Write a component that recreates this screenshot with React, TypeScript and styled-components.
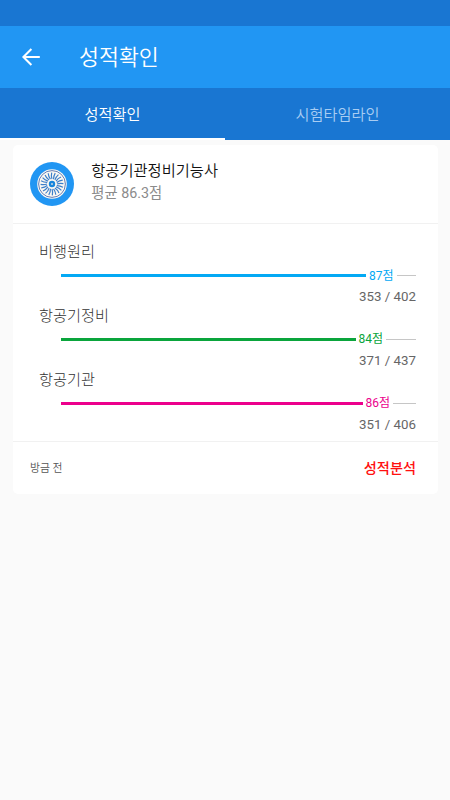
import React from "react";
import styled, { createGlobalStyle } from "styled-components";

const GlobalStyle = createGlobalStyle`
  * { box-sizing: border-box; }
  body {
    margin: 0;
    background: #fafafa;
    font-family: Roboto, "Noto Sans CJK KR", sans-serif;
  }
`;

const Screen = styled.div`
  display: flex;
  flex-direction: column;
  width: 450px;
  height: 800px;
  overflow: hidden;
  background: #fafafa;
`;

const StatusBar = styled.div`
  height: 26px;
  background: #1976d2;
`;

const AppBar = styled.header`
  display: flex;
  align-items: center;
  height: 62px;
  padding-left: 21px;
  gap: 38px;
  background: #2196f3;
  color: #fff;
`;

const BackButton = styled.button`
  display: flex;
  width: 20px;
  height: 20px;
  padding: 0;
  border: 0;
  background: none;
  color: inherit;
`;

const Title = styled.h1`
  margin: 2px 0 0;
  font-size: 21.7px;
  font-weight: 350;
  line-height: 32px;
`;

const Tabs = styled.nav`
  display: grid;
  grid-template-columns: 1fr 1fr;
  height: 52px;
  background: #1976d2;
`;

const Tab = styled.button<{ $active?: boolean }>`
  padding: 0;
  border: 0;
  border-bottom: 2px solid ${(p) => (p.$active ? "#fff" : "#1976d2")};
  background: none;
  color: ${(p) => (p.$active ? "#fff" : "#a9cdf2")};
  font-family: inherit;
  font-size: 15.2px;
  font-weight: 350;
`;

const Card = styled.article`
  margin: 5px 12px 0 12.5px;
  height: 349px;
  border-radius: 5px;
  background: #fff;
`;

const CardHeader = styled.div`
  display: flex;
  gap: 17.3px;
  height: 79px;
  padding: 17px 17.5px 0;
  border-bottom: 1px solid #f1f1f1;
`;

const Summary = styled.div`
  margin-top: -2px;
`;

const Name = styled.div`
  color: #111;
  font-size: 15.3px;
  font-weight: 350;
  line-height: 22px;
`;

const Average = styled.div`
  color: #8b8b8b;
  font-size: 14.3px;
  font-weight: 400;
  line-height: 22px;
`;

const Subjects = styled.div`
  height: 218px;
  padding: 17px 22px 0 26.5px;
  border-bottom: 1px solid #f1f1f1;
`;

const Subject = styled.section`
  height: 63.8px;
`;

const SubjectName = styled.div`
  color: #333;
  font-size: 15.2px;
  font-weight: 300;
  line-height: 22px;
`;

const Track = styled.div`
  display: flex;
  align-items: center;
  height: 16px;
  margin: 4.5px 0 0 22px;
`;

const Fill = styled.div<{ $color: string; $width: number }>`
  width: ${(p) => p.$width}px;
  height: 3px;
  background: ${(p) => p.$color};
`;

const Score = styled.span<{ $color: string }>`
  width: 30.5px;
  padding-left: 3px;
  color: ${(p) => p.$color};
  font-size: 12px;
  font-weight: 400;
  line-height: 16px;
  white-space: nowrap;
`;

const Rest = styled.div`
  flex: 1;
  height: 1px;
  background: #c6c6c6;
`;

const Count = styled.div`
  margin-top: 3.5px;
  color: #666;
  font-size: 13.3px;
  line-height: 20px;
  text-align: right;
`;

const CardFooter = styled.footer`
  display: flex;
  align-items: center;
  justify-content: space-between;
  height: 50px;
  padding: 0 22px 0 17.5px;
`;

const Time = styled.span`
  color: #555;
  font-size: 10.8px;
  font-weight: 350;
`;

const Analyze = styled.button`
  padding: 0 0 1px;
  border: 0;
  background: none;
  color: #ff1010;
  font-family: inherit;
  font-size: 14.2px;
  font-weight: 500;
`;

const subjects = [
  { name: "비행원리", score: 87, count: "353 / 402", color: "#03a9f4", width: 305 },
  { name: "항공기정비", score: 84, count: "371 / 437", color: "#0aa53c", width: 294.5 },
  { name: "항공기관", score: 86, count: "351 / 406", color: "#ec008c", width: 301.5 },
];

const blades = Array.from({ length: 20 }, (_, i) => i * 18);

function ArrowLeft() {
  return (
    <svg width="20" height="20" viewBox="0 0 20 20" fill="none" stroke="currentColor" strokeWidth="2">
      <path d="M18.8 10H2.5M10.4 2L2.4 10l8 8" />
    </svg>
  );
}

function TurbineBadge() {
  return (
    <svg width="44" height="44" viewBox="0 0 44 44">
      <circle cx="22" cy="22" r="22" fill="#2196f3" />
      <circle cx="22" cy="22" r="14.8" fill="#fbf8f2" />
      <circle cx="22" cy="22" r="13.4" fill="none" stroke="#3f5fa8" strokeWidth="0.8" />
      {blades.map((angle) => (
        <path
          key={angle}
          d="M22 17Q20.9 14 21.7 10.6"
          fill="none"
          stroke="#3d7fca"
          strokeWidth="1.2"
          transform={`rotate(${angle} 22 22)`}
        />
      ))}
      <circle cx="22" cy="22" r="3.2" fill="#1685dc" />
      <circle cx="22" cy="22" r="1" fill="#c8d3dd" />
    </svg>
  );
}

export default function App() {
  return (
    <Screen lang="ko">
      <GlobalStyle />
      <StatusBar />
      <AppBar>
        <BackButton aria-label="뒤로">
          <ArrowLeft />
        </BackButton>
        <Title>성적확인</Title>
      </AppBar>
      <Tabs>
        <Tab $active>성적확인</Tab>
        <Tab>시험타임라인</Tab>
      </Tabs>
      <Card>
        <CardHeader>
          <TurbineBadge />
          <Summary>
            <Name>항공기관정비기능사</Name>
            <Average>평균 86.3점</Average>
          </Summary>
        </CardHeader>
        <Subjects>
          {subjects.map((s) => (
            <Subject key={s.name}>
              <SubjectName>{s.name}</SubjectName>
              <Track>
                <Fill $color={s.color} $width={s.width} />
                <Score $color={s.color}>{s.score}점</Score>
                <Rest />
              </Track>
              <Count>{s.count}</Count>
            </Subject>
          ))}
        </Subjects>
        <CardFooter>
          <Time>방금 전</Time>
          <Analyze>성적분석</Analyze>
        </CardFooter>
      </Card>
    </Screen>
  );
}
